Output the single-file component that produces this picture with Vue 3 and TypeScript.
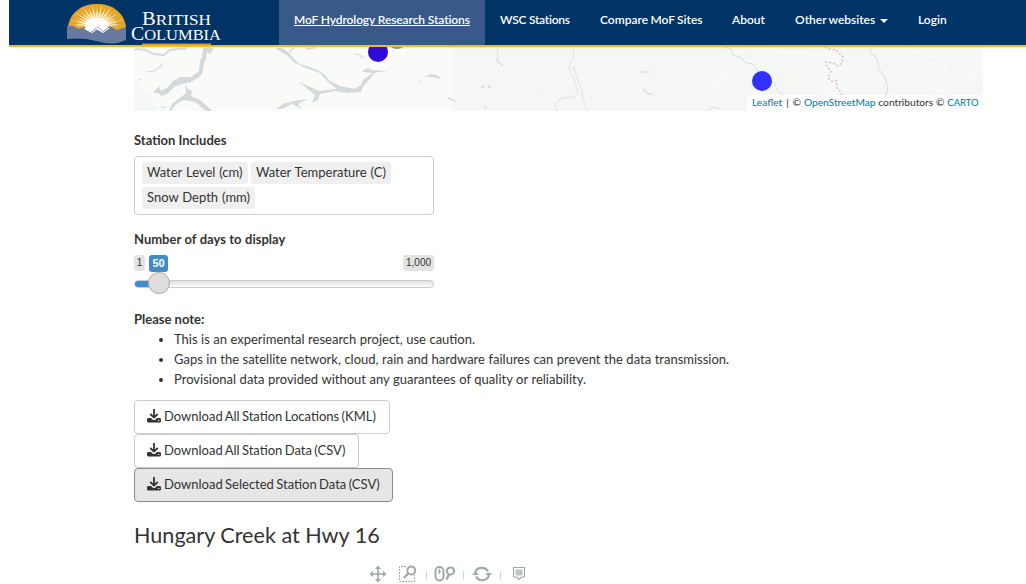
<script setup lang="ts">
interface NavItem { label: string; width: number; active?: boolean; caret?: boolean; cls: string }
const nav: NavItem[] = [
  { label: 'MoF Hydrology Research Stations', width: 206, active: true, cls: 'n1' },
  { label: 'WSC Stations', width: 100, cls: 'n2' },
  { label: 'Compare MoF Sites', width: 132, cls: 'n3' },
  { label: 'About', width: 63, cls: 'n4' },
  { label: 'Other websites', width: 123, caret: true, cls: 'n5' },
  { label: 'Login', width: 58, cls: 'n6' },
]
const tags = [
  { label: 'Water Level (cm)', width: 106 },
  { label: 'Water Temperature (C)', width: 140 },
  { label: 'Snow Depth (mm)', width: 113 },
]
const notes: string[] = [
  'This is an experimental research project, use caution.',
  'Gaps in the satellite network, cloud, rain and hardware failures can prevent the data transmission.',
  'Provisional data provided without any guarantees of quality or reliability.',
]
const downloads = [
  { label: 'Download All Station Locations (KML)', width: 256, active: false },
  { label: 'Download All Station Data (CSV)', width: 225, active: false },
  { label: 'Download Selected Station Data (CSV)', width: 259, active: true },
]
const days = 50
const maxDays = 1000
const knob = ((days - 1) / (maxDays - 1)) * 278
const rays = Array.from({ length: 17 }, (_, i) => {
  const a = Math.PI * (1 - (i + 0.5) / 17)
  const p = (r: number, d: number) => `${(30 + r * Math.cos(a + d)).toFixed(1)},${(26 - r * Math.sin(a + d) * 0.8).toFixed(1)}`
  return `${p(i % 2 ? 27 : 24, 0)} ${p(11, -0.09)} ${p(11, 0.09)}`
})
</script>

<template>
  <div class="page">
    <header class="navbar">
      <svg class="logo" width="160" height="45" viewBox="0 0 160 45">
        <path d="M1 27C3 12 15 4 30 4S57 12 59 27L54 30H5Z" fill="#e3a62a" />
        <path d="M9 27C12 17 22 12 30 12S48 17 51 27Z" fill="#e9b850" />
        <polygon v-for="(r, i) in rays" :key="i" :points="r" fill="#fff3d2" />
        <ellipse cx="30" cy="26" rx="12" ry="8.5" fill="#fff" />
        <path d="M0 26L6 26L12 29L20 26L25 31L31 26L36 31L42 26L50 30L59 27V40C48 45 40 44 29 41C18 38 9 38 0 39Z" fill="#68799f" />
        <path d="M17 28.5L20 26.5L22 30L25 32L31 27L36 32L41 28L43 28L36 33L30 29.500L25 33L19 30Z" fill="#fff" />
        <path d="M18 27L24 31.500L31 26.500L36 31L42 26.500L41 23H20Z" fill="#fff" />
        <g class="word" fill="#fff">
          <text x="75" y="24.5" textLength="69" lengthAdjust="spacingAndGlyphs"><tspan font-size="18">B</tspan><tspan font-size="15">RITISH</tspan></text>
          <text x="64" y="39.5" textLength="90" lengthAdjust="spacingAndGlyphs"><tspan font-size="18">C</tspan><tspan font-size="15">OLUMBIA</tspan></text>
        </g>
        <path d="M75 44.2H144" stroke="#d89d23" stroke-width="1.4" />
      </svg>
      <nav>
        <a v-for="n in nav" :key="n.label" :class="[n.cls, { active: n.active }]" :style="{ width: n.width + 'px' }"><span>{{ n.label }}</span><i v-if="n.caret" class="caret" /></a>
      </nav>
    </header>

    <main>
      <section class="map">
        <svg width="849" height="64" viewBox="0 0 849 64" fill="none">
          <rect width="849" height="64" fill="#f5f7f5" />
          <path d="M0 0H319V64H22L15 48L6 42L0 30Z" fill="#fafaf8" />
          <path d="M610 0L660 20L690 50L730 38L700 5ZM745 0L760 30L810 48L849 25V0ZM570 20L600 30L590 42L570 35Z" fill="#f7f9f7" />
          <g fill="#d4dadc">
            <path d="M69 1L75 0L80 2L76 7L73 5L72 12L70 16L68 27L64 31L57 35L48 37L40 40L33 47L27 49L25 46L19 46L25 39L27 44L34 40L39 34L46 30L57 30L65 24L66 14L68 10Z" />
            <path d="M51 37L54 42L58 44L57 49L66 53L72 58L78 64H72L65 58L61 55L50 53L42 57L37 64H35L38 57L46 51L52 46Z" />
            <path d="M141 1L148 1L154 5L159 11L165 17L173 19L183 23L190 27L196 34L206 39L221 42L227 38L229 33L243 23L236 32L230 38L227 45L214 46L201 44L186 47L184 53L178 56L181 48L165 35L185 44L203 42L193 34L186 26L172 21L161 16L154 9Z" />
            <path d="M142 62L149 57L160 54L174 52L164 57L168 62L158 57L148 62Z" />
            <path d="M229 23L234 21L238 23L254 24L238 26L229 25ZM290 30L297 27L303 28L307 32L298 30Z" />
          </g>
          <g stroke="#d4dadc" stroke-linejoin="round">
            <path d="M0 3L4 2L11 3L20 7L30 8L36 3L53 1" stroke-width="1.8" />
            <path d="M12 25L20 24L26 20L29 16M4 33L7 32M27 60L32 61" stroke-width="1.2" />
            <path d="M155 5L160 1M172 2L181 1" stroke-width="1.3" />
            <path d="M284 34L287 35M220 7L226 8L229 11" stroke-width="1.2" />
            <path d="M314 51L321 54M347 40H350M354 40H357M350 59L352 61M408 45V46" stroke-width="1.5" />
            <path d="M363 2L364 8L363 14L369 19" stroke-width="1.1" />
            <path d="M439 0L440 8L436 16L435 24L440 31L442 39L444 45L440 50L428 51L424 54L421 59L424 64M438 23L440 20L444 35L448 43L449 52L453 64" stroke-width=".7" />
            <path d="M506 25H516M509 42L513 46L519 48" stroke-width="1.2" />
            <path d="M589 0L597 2L599 8L606 10L612 16L619 17L625 26L634 34L640 36L644 44L650 49M736 0L737 7L743 11L745 22L751 31L754 40L752 49M574 64L579 60L585 62" stroke-width=".9" />
            <path d="M650 7L645 14M771 0L777 7L786 10L790 17L797 18M827 7L820 13L814 21L817 26M792 14L801 11" stroke-width=".35" />
          </g>
          <path d="M691 0L696 2L702 3L706 7L709 10L708 16L704 19L699 16L692 15L693 20L697 24L694 31L697 34L703 34L703 41L707 45L708 50" stroke="#dfb9c4" stroke-width="1.4" stroke-dasharray="2 2" />
          <circle cx="263" cy="-8" r="10" fill="#6597bf" />
          <circle cx="244" cy="5" r="10" fill="#3309d9" />
          <circle cx="628" cy="34" r="10" fill="#3030ff" />
        </svg>
        <div class="credit"><a>Leaflet</a><span class="bar"> | </span>© <a>OpenStreetMap</a> contributors © <a class="carto">CARTO</a></div>
      </section>

      <label class="l1"><span>Station Includes</span></label>
      <div class="select">
        <span v-for="t in tags" :key="t.label" class="tag" :style="{ width: t.width + 'px' }">{{ t.label }}</span>
      </div>

      <label class="l2">Number of days to display</label>
      <div class="slider">
        <div class="pills"><span class="min">1</span><span class="val">{{ days }}</span><span class="max">1,000</span></div>
        <div class="track"><div class="fill" :style="{ width: knob + 11 + 'px' }" /></div>
        <div class="knob" :style="{ left: knob + 'px' }" />
      </div>

      <label class="l3">Please note:</label>
      <ul>
        <li v-for="(n, i) in notes" :key="n" :class="'li' + i">{{ n }}</li>
      </ul>

      <div class="downloads">
        <button v-for="d in downloads" :key="d.label" :class="{ active: d.active }" :style="{ width: d.width + 'px' }">
          <svg width="14" height="14" viewBox="0 0 14 14">
            <path d="M7 0V8M3.3 5L7 8.6L10.7 5" fill="none" stroke="#333" stroke-width="1.8" />
            <path d="M1.5 9H4L5.4 10.4Q7 11.5 8.6 10.4L10 9H12.5Q14 9 14 10.4V12.2Q14 13.6 12.5 13.6H1.5Q0 13.6 0 12.2V10.4Q0 9 1.5 9Z" fill="#333" />
            <circle cx="11.7" cy="11.4" r=".7" fill="#fff" />
          </svg>
          <span>{{ d.label }}</span>
        </button>
      </div>

      <h3>Hungary Creek at Hwy 16</h3>

      <div class="tools">
        <svg width="160" height="18" viewBox="0 0 160 18" fill="none" stroke="#a1a6a9" stroke-width="1.6">
          <path d="M9 2V16M2 9H16" />
          <path d="M9 .5L12 4H6ZM9 17.5L12 14H6ZM.5 9L4 6V12ZM17.5 9L14 6V12Z" fill="#a1a6a9" stroke="none" />
          <path d="M37 1.5H30.5V16.5H45.5V10" stroke-width="1" stroke-dasharray="2 1" />
          <circle cx="42.3" cy="5.5" r="3.9" stroke-width="2" />
          <path d="M39.3 8.5L34.8 13" stroke-width="2.4" />
          <path d="M57.5 6V15M94.5 6V15M131.5 6V15" stroke="#d5d5d5" stroke-width="1" />
          <rect x="66.5" y="2" width="8" height="13.5" rx="4" stroke-width="1.9" />
          <path d="M70.5 4V9M69 6.5H72" stroke-width="1.2" />
          <circle cx="81.5" cy="6" r="3.6" stroke-width="2" />
          <path d="M80 9.5L77.5 14.5" stroke-width="2.2" />
          <path d="M106 7.5A7 6.5 0 0 1 119 6.5M120 10.5A7 6.5 0 0 1 107 11.5" stroke-width="2.1" />
          <path d="M116 8H123L119.5 11.5ZM103 10H110L106.5 6.5Z" fill="#a1a6a9" stroke="none" />
          <path d="M144.5 2.5H155.5V12H152.5L150 14.5L147.5 12H144.5Z" stroke-width="1.1" />
          <path d="M146.5 4.5H153.5V10.5H146.5Z" fill="#c2c5c7" stroke="none" />
        </svg>
      </div>
    </main>
  </div>
</template>

<style>
html, body { margin: 0; background: #fff; overflow: hidden; }
</style>

<style scoped>
* { box-sizing: border-box; }
.page { width: 1026px; height: 584px; overflow: hidden; font: 13px/20px Lato, "Liberation Sans", sans-serif; color: #333; white-space: nowrap; }
.navbar { height: 47px; margin-left: 9px; background: #036; border-bottom: 2px solid #fcba19; display: flex; }
.logo { margin-left: 58px; flex: none; }
.word { font-family: "Liberation Serif", serif; }
nav { display: flex; margin-left: 52px; }
nav a { height: 45px; padding: 10px 0 0 15px; color: #fff; font-size: 12px; font-weight: 600; flex: none; }
nav a.active { background: #38598a; text-decoration: underline; }
.n1 { letter-spacing: -.1px; }
.n2 { letter-spacing: -.25px; }
.n3 { word-spacing: -.6px; }
.n5 { word-spacing: -.6px; }
.caret { display: inline-block; margin-left: 5px; border: 4px solid transparent; border-top-color: #fff; border-bottom: 0; vertical-align: middle; }
main { padding-left: 134px; }
.map { position: relative; width: 849px; height: 64px; overflow: hidden; }
.map svg { display: block; }
.credit { position: absolute; right: 0; bottom: 0; width: 236px; height: 16px; padding-left: 5px; background: rgba(255,255,255,.7); font-size: 10.2px; line-height: 15px; word-spacing: .2px; }
.credit a { color: #0078a8; }
.credit .bar { word-spacing: 1.3px; }
.credit .carto { font-size: 9.5px; }
label { display: block; height: 20px; font-weight: 700; }
.l1 { margin-top: 19px; }
.select { width: 300px; height: 59px; margin-top: 6px; padding: 5px 7px; border: 1px solid #ccc; border-radius: 4px; display: flex; flex-wrap: wrap; align-content: flex-start; gap: 3px; }
.tag { height: 22px; padding-left: 5px; line-height: 20px; border-radius: 3px; background: #efefef; word-spacing: .6px; }
.l2 { margin-top: 14px; word-spacing: .3px; }
.slider { position: relative; width: 300px; height: 40px; margin-top: 6px; }
.pills { display: flex; height: 17px; font: 10px/16px "Liberation Sans", sans-serif; }
.pills span { height: 16px; border-radius: 3px; background: #e3e3e3; text-align: center; }
.pills .min { width: 11px; }
.pills .val { width: 19px; height: 17px; margin-left: 4px; color: #fff; background: #428bca; font-size: 11px; font-weight: 700; line-height: 17px; }
.pills .max { width: 31px; margin-left: auto; }
.track { height: 8px; margin-top: 8px; border: 1px solid #ccc; border-radius: 8px; background: linear-gradient(#dedede, #fff); overflow: hidden; }
.fill { height: 8px; margin: -1px; background: #428bca; }
.knob { position: absolute; top: 17px; width: 22px; height: 22px; border: 1px solid #ababab; border-radius: 50%; background: #dedede; box-shadow: 1px 1px 3px rgba(255,255,255,.3); }
.l3 { margin-top: 14px; }
ul { margin: 0; padding-left: 40px; }
.li0 { word-spacing: .15px; }
.li1 { word-spacing: .2px; }
.li2 { word-spacing: .22px; }
.downloads { display: flex; flex-direction: column; margin-top: 11px; }
button { display: flex; align-items: center; height: 34px; padding: 0 0 2px 12px; gap: 3px; border: 1px solid #ccc; border-radius: 4px; background: #fff; color: #333; font: inherit; word-spacing: -.95px; }
button.active { background: #e6e6e6; border-color: #8c8c8c; }
h3 { margin: 21px 0 0; height: 24px; font-size: 21.6px; line-height: 24px; font-weight: 400; }
.tools { height: 18px; margin: 18px 0 0 235px; }
.tools svg { display: block; }
</style>
